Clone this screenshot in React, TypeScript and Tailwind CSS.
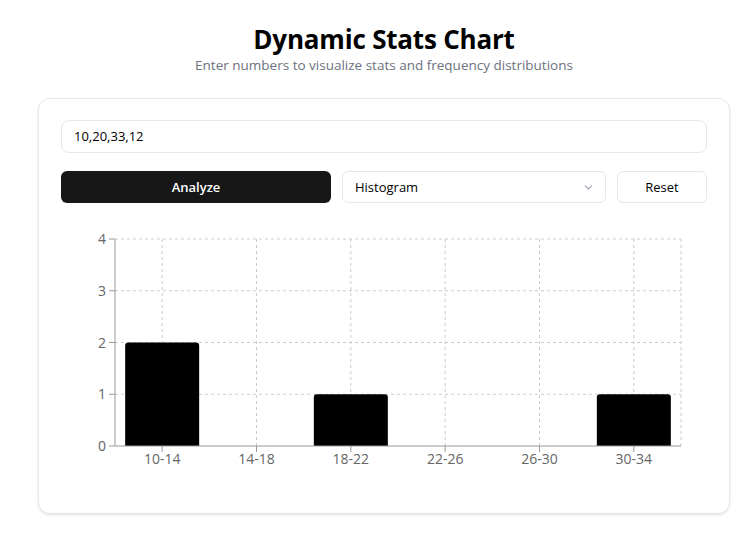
import React from "react";

const bars = [
  { label: "10-14", v: 2 },
  { label: "14-18", v: 0 },
  { label: "18-22", v: 1 },
  { label: "22-26", v: 0 },
  { label: "26-30", v: 0 },
  { label: "30-34", v: 1 },
];

function Chart() {
  const x0 = 54;
  const x1 = 620;
  const y0 = 219;
  const yTop = 12;
  const unit = (y0 - yTop) / 4;
  const bw = (x1 - x0) / 6;
  return (
    <svg width={646} height={263} className="block" style={{ fontFamily: '"Open Sans", "Noto Sans", sans-serif' }}>
      {[0, 1, 2, 3].map((i) => (
        <line key={"h" + i} x1={x0} x2={x1} y1={yTop + i * unit} y2={yTop + i * unit} stroke="#ccc" strokeDasharray="3 3" />
      ))}
      {bars.map((b, i) => (
        <line key={"v" + i} x1={x0 + bw * (i + 0.5)} x2={x0 + bw * (i + 0.5)} y1={yTop} y2={y0} stroke="#ccc" strokeDasharray="3 3" />
      ))}
      <line x1={x1} x2={x1} y1={yTop} y2={y0} stroke="#ccc" strokeDasharray="3 3" />
      {bars.map((b, i) => {
        if (!b.v) return null;
        const cx = x0 + bw * (i + 0.5);
        const w = 74;
        const h = b.v * unit;
        const x = cx - w / 2;
        const y = y0 - h;
        const r = 3;
        return (
          <path
            key={"b" + i}
            d={`M${x},${y0} L${x},${y + r} Q${x},${y} ${x + r},${y} L${x + w - r},${y} Q${x + w},${y} ${x + w},${y + r} L${x + w},${y0} Z`}
            fill="#000"
          />
        );
      })}
      <line x1={x0} x2={x0} y1={yTop} y2={y0} stroke="#999" />
      <line x1={x0} x2={x1} y1={y0} y2={y0} stroke="#999" />
      {[0, 1, 2, 3, 4].map((v) => {
        const y = y0 - v * unit;
        return (
          <g key={"yt" + v}>
            <line x1={x0 - 6} x2={x0} y1={y} y2={y} stroke="#999" />
            <text x={x0 - 9} y={y + 5} textAnchor="end" fontSize={14} fill="#666">
              {v}
            </text>
          </g>
        );
      })}
      {bars.map((b, i) => {
        const cx = x0 + bw * (i + 0.5);
        return (
          <g key={"xt" + i}>
            <line x1={cx} x2={cx} y1={y0} y2={y0 + 6} stroke="#999" />
            <text x={cx} y={y0 + 18} textAnchor="middle" fontSize={14} fill="#666">
              {b.label}
            </text>
          </g>
        );
      })}
    </svg>
  );
}

export default function App() {
  return (
    <div className="min-h-[535px] w-[754px] bg-white text-black" style={{ fontFamily: '"Open Sans", "Noto Sans", sans-serif' }}>
      <div className="pl-[38px] pt-[22px] w-[730px]">
        <div className="flex flex-col items-center">
          <h1 className="text-[26px] leading-[35px] font-bold tracking-[-0.2px]">Dynamic Stats Chart</h1>
          <p className="text-[13.5px] leading-[18px] text-[#6b7280] -mt-[1px]">Enter numbers to visualize stats and frequency distributions</p>
        </div>
        <div className="mt-[24px] rounded-[12px] border border-[#e5e7eb] shadow-sm px-[22px] pt-[21px] pb-[23px]">
          <div className="h-[33px] rounded-[8px] border border-[#e5e7eb] flex items-center px-[12px] text-[13px]">10,20,33,12</div>
          <div className="mt-[18px] flex gap-[11px] h-[32px]">
            <button className="w-[270px] rounded-[6px] bg-[#171717] text-white text-[13px] font-semibold pt-[1px]">Analyze</button>
            <div className="w-[264px] rounded-[6px] border border-[#e5e7eb] flex items-center justify-between pl-[12px] pr-[10px] text-[13px] pt-[1px]">
              <span>Histogram</span>
              <svg width="13" height="13" viewBox="0 0 24 24" fill="none" stroke="#9ca3af" strokeWidth="2" strokeLinecap="round" strokeLinejoin="round">
                <path d="m6 9 6 6 6-6" />
              </svg>
            </div>
            <button className="w-[90px] rounded-[6px] border border-[#e5e7eb] text-[13px] font-medium pt-[1px]">Reset</button>
          </div>
          <div className="mt-[24px]">
            <Chart />
          </div>
        </div>
      </div>
    </div>
  );
}
